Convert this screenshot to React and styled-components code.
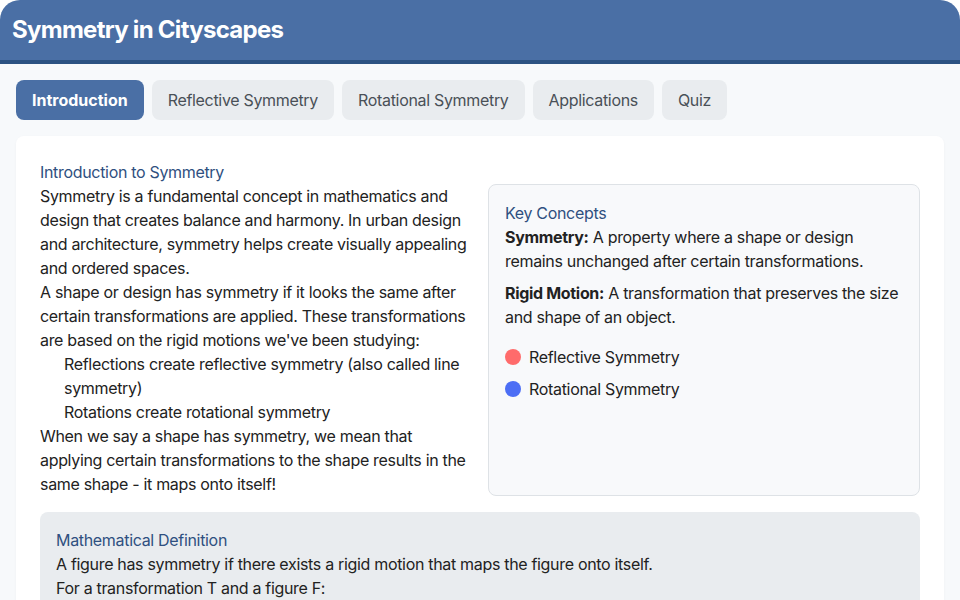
import styled, { createGlobalStyle } from "styled-components";

const GlobalStyle = createGlobalStyle`
    html, body {
        margin: 0;
        padding: 0;
        background: #ffffff;
        font-family: Inter, "Noto Sans", sans-serif;
        letter-spacing: -0.02em;
        color: #222;
    }
    * {
        box-sizing: border-box;
    }
`;

const tabs = [
    "Introduction",
    "Reflective Symmetry",
    "Rotational Symmetry",
    "Applications",
    "Quiz",
];

function App() {
    return (
        <>
            <GlobalStyle />
            <Page>
                <Header>
                    <Title>Symmetry in Cityscapes</Title>
                </Header>
                <Main>
                    <Tabs>
                        {tabs.map((tab, i) => (
                            <Tab key={tab} active={i === 0}>
                                {tab}
                            </Tab>
                        ))}
                    </Tabs>
                    <Card>
                        <Columns>
                            <div>
                                <Heading>Introduction to Symmetry</Heading>
                                <Text>
                                    Symmetry is a fundamental concept in mathematics and
                                    design that creates balance and harmony. In urban design
                                    and architecture, symmetry helps create visually appealing
                                    and ordered spaces.
                                </Text>
                                <Text>
                                    A shape or design has symmetry if it looks the same after
                                    certain transformations are applied. These transformations
                                    are based on the rigid motions we've been studying:
                                </Text>
                                <List>
                                    <li>
                                        Reflections create reflective symmetry (also called line
                                        symmetry)
                                    </li>
                                    <li>Rotations create rotational symmetry</li>
                                </List>
                                <Text>
                                    When we say a shape has symmetry, we mean that applying
                                    certain transformations to the shape results in the same
                                    shape - it maps onto itself!
                                </Text>
                            </div>
                            <ConceptBox>
                                <Heading>Key Concepts</Heading>
                                <Concept>
                                    <strong>Symmetry:</strong> A property where a shape or
                                    design remains unchanged after certain transformations.
                                </Concept>
                                <Concept>
                                    <strong>Rigid Motion:</strong> A transformation that
                                    preserves the size and shape of an object.
                                </Concept>
                                <Legend>
                                    <LegendItem>
                                        <Dot color="#ff6b6b" />
                                        Reflective Symmetry
                                    </LegendItem>
                                    <LegendItem>
                                        <Dot color="#4c6ef5" />
                                        Rotational Symmetry
                                    </LegendItem>
                                </Legend>
                            </ConceptBox>
                        </Columns>
                        <DefinitionBox>
                            <Heading>Mathematical Definition</Heading>
                            <Text>
                                A figure has symmetry if there exists a rigid motion that maps
                                the figure onto itself.
                            </Text>
                            <Text>For a transformation T and a figure F:</Text>
                        </DefinitionBox>
                    </Card>
                </Main>
            </Page>
        </>
    );
}

const Page = styled.div`
    min-height: 600px;
    background: #f7f9fb;
    border-radius: 20px 20px 0 0;
    overflow: hidden;
`;

const Header = styled.header`
    background: #4a6fa5;
    border-bottom: 4px solid #2c5282;
    padding: 16px 12px;
`;

const Title = styled.h1`
    margin: 0;
    color: #ffffff;
    font-size: 24px;
    line-height: 28px;
    font-weight: 700;
    letter-spacing: -0.03em;
`;

const Main = styled.main`
    padding: 16px;
`;

const Tabs = styled.nav`
    display: flex;
    gap: 8px;
    margin-bottom: 16px;
`;

const Tab = styled.button`
    border: none;
    border-radius: 8px;
    height: 40px;
    padding: 0 16px;
    font-family: inherit;
    font-size: 16px;
    letter-spacing: ${({ active }) => (active ? "0" : "-0.02em")};
    font-weight: ${({ active }) => (active ? 700 : 400)};
    background: ${({ active }) => (active ? "#4a6fa5" : "#e9ecef")};
    color: ${({ active }) => (active ? "#ffffff" : "#495057")};
    cursor: pointer;
`;

const Card = styled.section`
    background: #ffffff;
    border-radius: 8px;
    padding: 24px;
    box-shadow: 0 1px 3px rgba(0, 0, 0, 0.04);
`;

const Columns = styled.div`
    display: grid;
    grid-template-columns: 1fr 1fr;
    gap: 16px;
    margin-bottom: 16px;
`;

const Heading = styled.h3`
    margin: 0;
    font-size: 16px;
    line-height: 24px;
    font-weight: 400;
    color: #2f5080;
`;

const Text = styled.p`
    margin: 0;
    font-size: 16px;
    line-height: 24px;
    color: #222;
`;

const List = styled.ul`
    margin: 0;
    padding-left: 24px;
    list-style: none;
    font-size: 16px;
    line-height: 24px;
`;

const ConceptBox = styled.aside`
    margin-top: 24px;
    background: #f8f9fb;
    border: 1px solid #dee2e6;
    border-radius: 8px;
    padding: 16px;
`;

const Concept = styled.p`
    margin: 0 0 8px;
    font-size: 16px;
    line-height: 24px;
    color: #222;

    strong {
        font-weight: 700;
    }
`;

const Legend = styled.div`
    display: flex;
    flex-direction: column;
    gap: 8px;
    margin-top: 16px;
`;

const LegendItem = styled.div`
    display: flex;
    align-items: center;
    gap: 8px;
    font-size: 16px;
    line-height: 24px;
`;

const Dot = styled.span`
    width: 16px;
    height: 16px;
    border-radius: 50%;
    background: ${({ color }) => color};
`;

const DefinitionBox = styled.div`
    background: #e9ecef;
    border-radius: 8px;
    padding: 16px;
`;

export default App;
